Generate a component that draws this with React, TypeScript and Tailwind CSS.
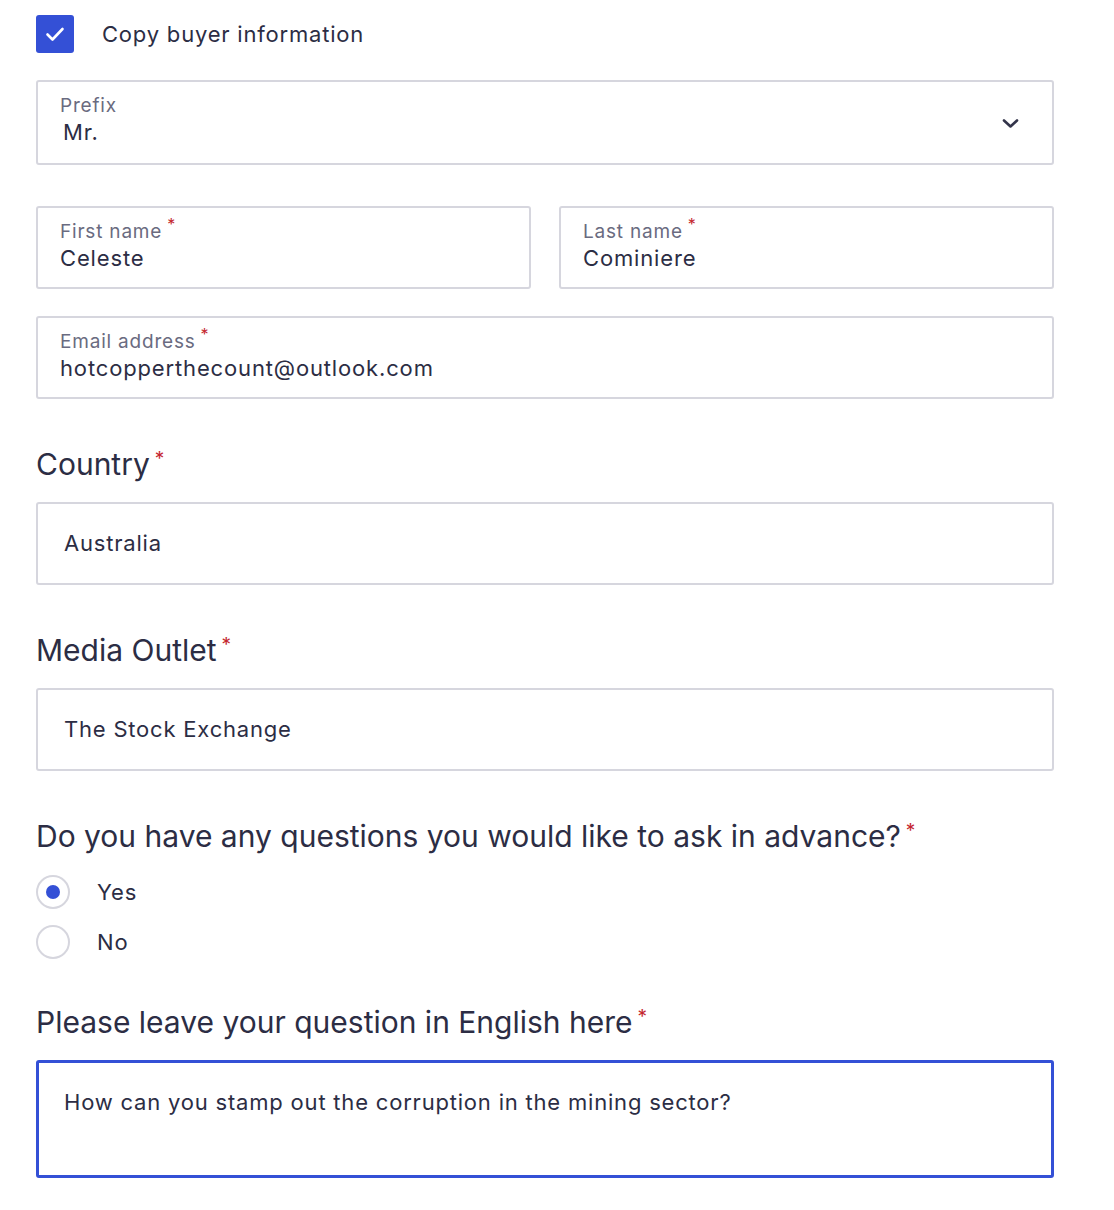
import React, { useState } from 'react';

const font = { fontFamily: 'Inter, "Noto Sans", sans-serif' };

const LabelReq = () => (
  <span className="relative -top-[4px] ml-[5px] inline-block align-top text-[16px] leading-[16px] text-[#c4262e]">*</span>
);

const HeadReq = () => (
  <span className="relative top-[3px] ml-[5px] inline-block align-top text-[19px] leading-[19px] text-[#c4262e]">*</span>
);

const FloatField = ({ label, value, required, tall, indent }: { label: string; value: string; required?: boolean; tall?: boolean; indent?: boolean }) => (
  <div className={`flex flex-col rounded-[3px] border-2 border-[#d6d6de] bg-white pl-[22px] pt-[12px] ${tall ? 'h-[85px]' : 'h-[83px]'}`}>
    <div className="text-[19px] leading-[24px] tracking-[0.8px] text-[#6a6b80]">
      {label}
      {required && <LabelReq />}
    </div>
    <div className={`text-[22px] leading-[28px] tracking-[0.85px] text-[#2c2d44] ${indent ? 'pl-[3px]' : ''}`}>{value}</div>
  </div>
);

const Heading = ({ children }: { children: React.ReactNode }) => (
  <div className="text-[30px] leading-[36px] text-[#2c2d44]">
    {children}
    <HeadReq />
  </div>
);

const PlainInput = ({ value }: { value: string }) => (
  <div className="flex h-[83px] items-center rounded-[3px] border-2 border-[#d6d6de] bg-white pl-[26px] text-[22px] tracking-[0.8px] text-[#2c2d44]">
    {value}
  </div>
);

const Radio = ({ checked, label, onClick }: { checked: boolean; label: string; onClick: () => void }) => (
  <button onClick={onClick} className="flex items-center gap-[27px]">
    <span className="flex h-[34px] w-[34px] items-center justify-center rounded-full border-2 border-[#d6d6de] bg-white">
      {checked && <span className="h-[14px] w-[14px] rounded-full bg-[#3450d6]" />}
    </span>
    <span className="text-[22px] leading-[28px] tracking-[0.8px] text-[#2c2d44]">{label}</span>
  </button>
);

export default function App() {
  const [copy, setCopy] = useState(true);
  const [ask, setAsk] = useState(true);

  return (
    <div className="min-h-screen bg-white pl-[36px] pr-[60px] pt-[15px] pb-[30px]" style={font}>
      <div className="flex items-center gap-[28px]">
        <button
          onClick={() => setCopy(!copy)}
          className={`flex h-[38px] w-[38px] items-center justify-center rounded-[3px] ${copy ? 'bg-[#3450d6]' : 'border-2 border-[#d6d6de] bg-white'}`}
        >
          {copy && (
            <svg width="20" height="16" viewBox="0 0 20 16" fill="none">
              <path d="M2.5 8.5l5 5L17.5 3" stroke="white" strokeWidth="2.6" strokeLinecap="round" strokeLinejoin="round" />
            </svg>
          )}
        </button>
        <span className="text-[22px] leading-[28px] tracking-[0.8px] text-[#2c2d44]">Copy buyer information</span>
      </div>

      <div className="relative mt-[27px]">
        <FloatField label="Prefix" value="Mr." tall indent />
        <svg className="absolute right-[35px] top-[38px]" width="17" height="11" viewBox="0 0 17 11" fill="none">
          <path d="M2 2.5l6.5 6 6.5-6" stroke="#33344a" strokeWidth="2.6" strokeLinecap="round" strokeLinejoin="round" />
        </svg>
      </div>

      <div className="mt-[41px] grid grid-cols-2 gap-[28px]">
        <FloatField label="First name" value="Celeste" required />
        <FloatField label="Last name" value="Cominiere" required />
      </div>

      <div className="mt-[27px]">
        <FloatField label="Email address" value="hotcopperthecount@outlook.com" required />
      </div>

      <div className="mt-[47px]">
        <Heading>Country</Heading>
      </div>
      <div className="mt-[20px]">
        <PlainInput value="Australia" />
      </div>

      <div className="mt-[47px]">
        <Heading>Media Outlet</Heading>
      </div>
      <div className="mt-[20px]">
        <PlainInput value="The Stock Exchange" />
      </div>

      <div className="mt-[47px]">
        <Heading>Do you have any questions you would like to ask in advance?</Heading>
      </div>
      <div className="mt-[21px] flex flex-col gap-[16px]">
        <Radio checked={ask} label="Yes" onClick={() => setAsk(true)} />
        <Radio checked={!ask} label="No" onClick={() => setAsk(false)} />
      </div>

      <div className="mt-[45px]">
        <Heading>Please leave your question in English here</Heading>
      </div>
      <div className="mt-[20px] h-[118px] rounded-[3px] border-[3px] border-[#3450d6] bg-white pl-[25px] pt-[25px] text-[22px] leading-[28px] tracking-[0.8px] text-[#2c2d44]">
        How can you stamp out the corruption in the mining sector?
      </div>
    </div>
  );
}
